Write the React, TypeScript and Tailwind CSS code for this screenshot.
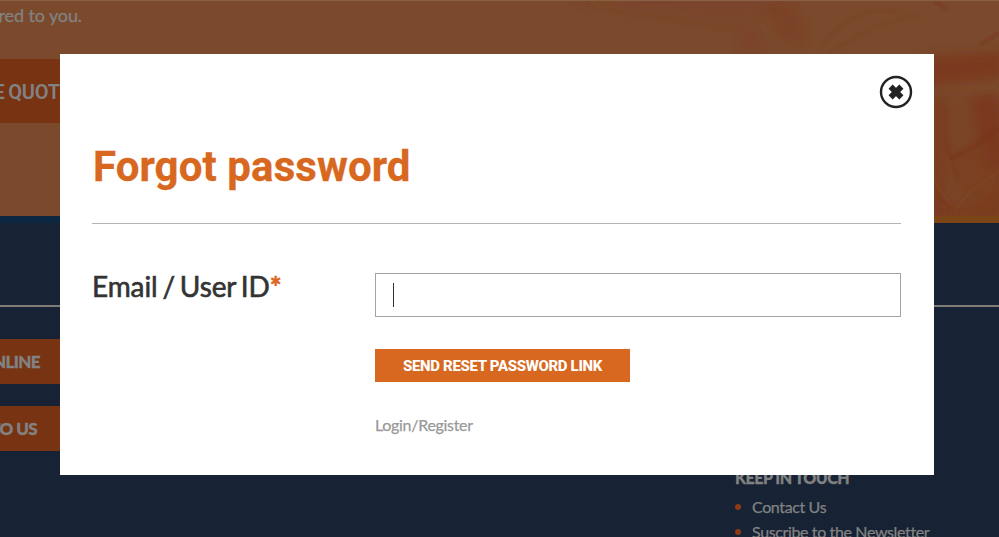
import React from "react";

const lato = "font-[Lato,sans-serif]";
const display = "font-[Roboto,sans-serif]";

function HeroTexture() {
  return (
    <svg className="absolute right-0 top-0 h-[216px] w-[599px]" viewBox="400 0 599 216" aria-hidden="true">
      <defs>
        <filter id="soft" x="-30%" y="-30%" width="160%" height="160%">
          <feGaussianBlur stdDeviation="4" />
        </filter>
        <filter id="fine">
          <feGaussianBlur stdDeviation="1.2" />
        </filter>
      </defs>
      <g filter="url(#soft)" fill="#7b341a">
        <path d="M570 0H780L740 27L700 20Z" opacity=".22" />
        <path d="M760 12L773 0H790L808 32L802 42L785 40L768 17Z" opacity=".35" />
        <path d="M742 25L754 22L765 54H738Z" opacity=".25" />
        <path d="M925 55L1005 50V77L925 86Z" opacity=".75" />
        <path d="M972 96L995 92L1005 120V176L987 161L976 132Z" opacity=".6" />
        <path d="M925 92H946V216H925Z" opacity=".35" />
        <path d="M930 92H1005V216H930Z" opacity=".3" />
        <path d="M950 149L980 137L999 125V176L970 205L955 183Z" opacity=".3" />
        <path d="M930 200L970 207L1005 174V220H930Z" opacity=".4" />
      </g>
      <g filter="url(#fine)" fill="none" stroke="#7b2d1b" strokeWidth="2">
        <path d="M934 0L948 9M981 43L999 32M951 157L968 149L982 140L999 128" opacity=".6" />
        <path d="M946 107V142L957 176M936 192L955 209" opacity=".35" />
        <path d="M955 209L971 190L999 170M934 181L954 208" stroke="#814b29" opacity=".5" />
        <path d="M820 46C850 10 872 7 904 11M828 52C865 30 884 18 919 15" stroke="#75401e" opacity=".35" />
      </g>
    </svg>
  );
}

function Backdrop() {
  return (
    <div className={`${lato} flex h-full flex-col bg-[#172234] text-[#828282]`}>
      <section className="relative h-[216px] shrink-0 overflow-hidden border-t border-[#8a6047] bg-[#7b4a2d]">
        <HeroTexture />
        <p className="relative flex w-[82px] justify-end whitespace-nowrap pt-[2px] text-[18px] leading-6 tracking-[-0.1px] [-webkit-text-stroke:0.25px]">ered to you.</p>
        <div className={`${display} relative mt-8 flex h-16 w-[71px] items-center justify-end whitespace-nowrap bg-[#783313] text-[20px] font-semibold tracking-[-0.2px] [word-spacing:-1px]`}>
          <span className="pt-[2px]">E QUOTE</span>
        </div>
      </section>
      <div className="flex h-[7px] shrink-0">
        <div className="w-1/2 bg-[#0b2741]" />
        <div className="w-1/2 bg-[#7c4518]" />
      </div>
      <div className="box-content h-[82px] shrink-0 border-b-2 border-[#7f7c78]" />
      <div className="mt-8 flex items-start">
        <div className="flex w-[735px] shrink-0 flex-col gap-[22px] text-[17px] font-black tracking-[-0.6px] [-webkit-text-stroke:0.3px]">
          <div className="flex h-[45px] w-[70px] items-center justify-end bg-[#783313] pr-[30px]">ONLINE</div>
          <div className="flex h-[45px] w-[70px] items-center justify-end whitespace-nowrap bg-[#783313] pr-[33px]">TO US</div>
        </div>
        <nav className="pt-[127px]">
          <h2 className="text-[16px] font-black leading-6 tracking-[-0.5px] [-webkit-text-stroke:0.3px]">KEEP IN TOUCH</h2>
          <ul className="mt-[4px] text-[16px] leading-[25px] tracking-[-0.37px] [-webkit-text-stroke:0.25px]">
            {["Contact Us", "Suscribe to the Newsletter"].map((item) => (
              <li key={item} className="flex items-center whitespace-nowrap">
                <span className="mr-[11px] size-[6px] rounded-full bg-[#8c3b13]" />
                {item}
              </li>
            ))}
          </ul>
        </nav>
      </div>
    </div>
  );
}

function CloseIcon() {
  return (
    <svg viewBox="0 0 34 34" className="size-[34px]" fill="none" stroke="#222">
      <circle cx="17" cy="17" r="15" strokeWidth="2.4" />
      <path d="M11.6 11.6L22.4 22.4M22.4 11.6L11.6 22.4" strokeWidth="5.8" />
    </svg>
  );
}

export default function App() {
  return (
    <main className="relative h-[537px] w-[999px] overflow-hidden">
      <Backdrop />
      <section role="dialog" aria-label="Forgot password" className={`${lato} absolute left-[60px] top-[54px] h-[421px] w-[874px] bg-white pl-8 pr-[33px]`}>
        <button aria-label="Close" className="absolute right-[21px] top-[21px]"><CloseIcon /></button>
        <header className="flex h-[170px] items-start border-b-[1.5px] border-[#b4b4b4] pt-[85px]">
          <h1 className={`${display} whitespace-nowrap pl-px text-[42px] font-bold leading-[56px] tracking-[0.1px] text-[#d86820] [-webkit-text-stroke:0.3px]`}>Forgot password</h1>
        </header>
        <form className="flex pt-[49px]" onSubmit={(e) => e.preventDefault()}>
          <label htmlFor="email" className="-mt-px w-[283px] shrink-0 whitespace-nowrap text-[28px] leading-[28px] tracking-[-0.1px] text-[#333] [-webkit-text-stroke:0.6px] [word-spacing:-2.2px]">
            Email / User ID<span className="font-bold text-[#d86820]">*</span>
          </label>
          <div className="flex flex-1 flex-col items-start">
            <div id="email" role="textbox" className="flex h-11 w-full items-center border-[1.5px] border-[#a3a3a3] pl-[17px]">
              <span className="h-[24px] w-px bg-[#333]" />
            </div>
            <button className={`${display} mt-8 flex h-[33px] w-[255px] items-center justify-center whitespace-nowrap bg-[#d86820] pt-[2px] text-[15px] font-extrabold tracking-[-0.33px] text-white`}>SEND RESET PASSWORD LINK</button>
            <a className="mt-[31px] whitespace-nowrap text-[16px] leading-6 tracking-[-0.3px] text-[#999] [-webkit-text-stroke:0.25px]">Login/Register</a>
          </div>
        </form>
      </section>
    </main>
  );
}
